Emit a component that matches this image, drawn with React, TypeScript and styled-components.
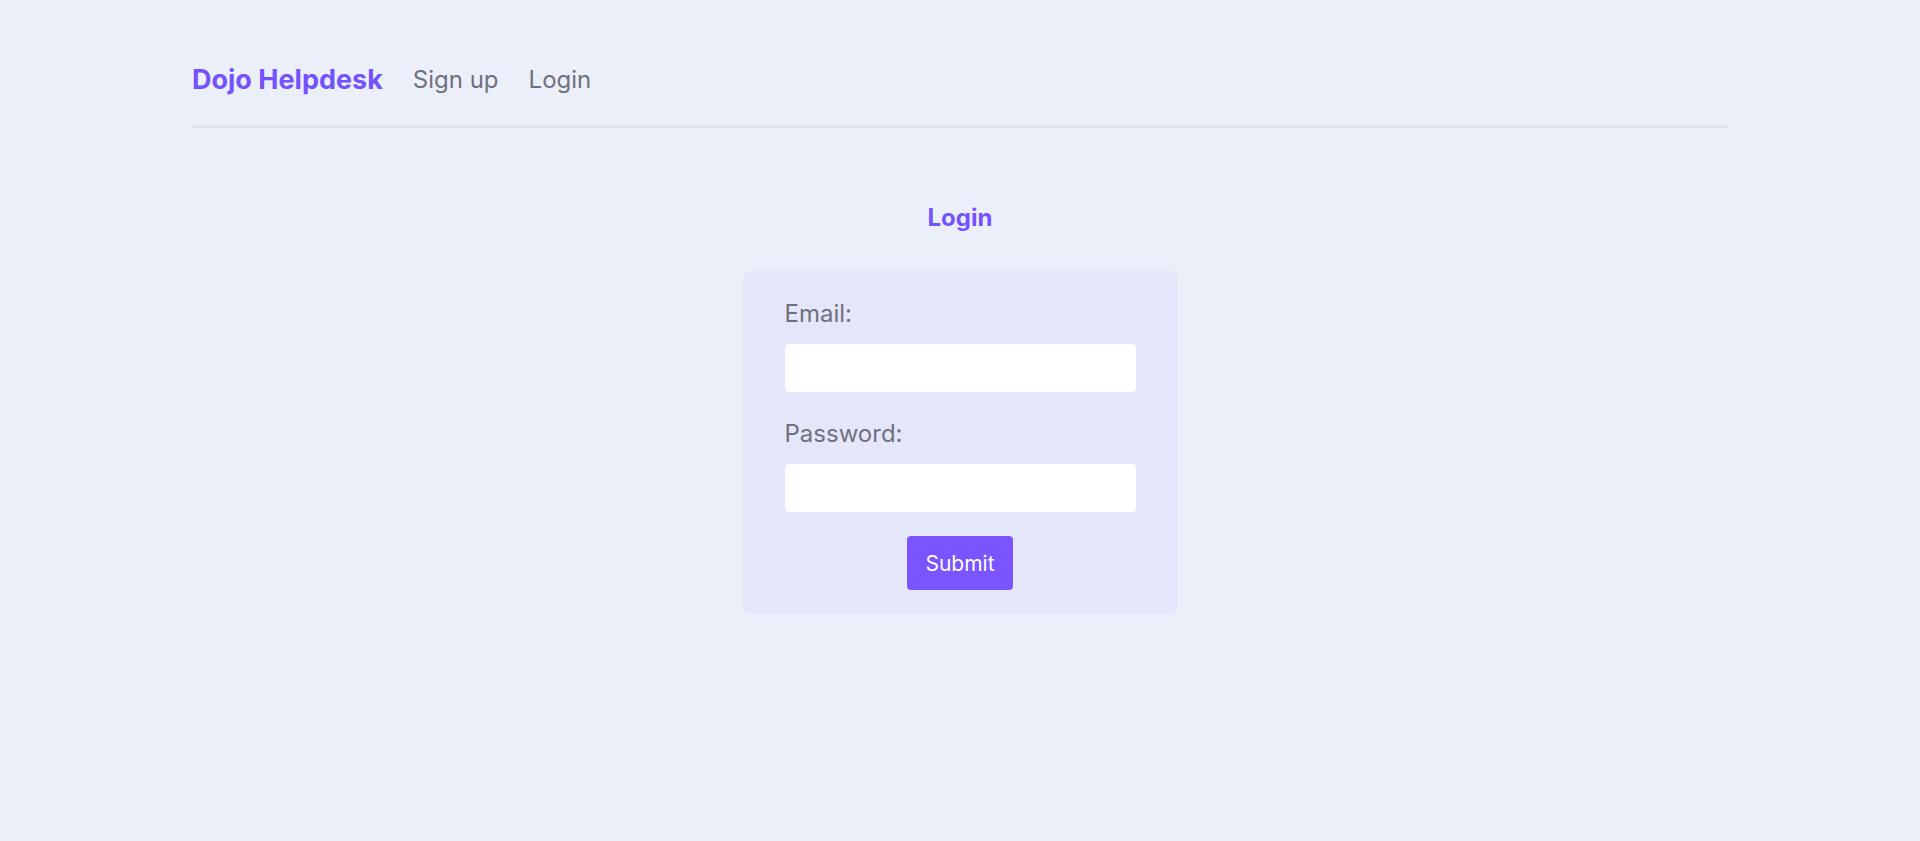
import styled, { createGlobalStyle } from "styled-components";

const GlobalStyle = createGlobalStyle`
    body {
        margin: 0;
        background: #ebeffa;
        font-family: Inter, "Noto Sans", sans-serif;
        color: #70707e;
    }
`

const Page = styled.div`
    width: 80%;
    margin: 0 auto;
`

const Nav = styled.nav`
    display: flex;
    align-items: center;
    gap: 30px;
    padding: 63px 0 29px;
    border-bottom: 3px solid #e3e5ec;
`

const Brand = styled.h1`
    margin: 0;
    font-size: 27px;
    font-weight: 700;
    color: #7453fc;
`

const NavLink = styled.a`
    font-size: 24px;
    color: #70707e;
    text-decoration: none;
`

const Main = styled.main`
    display: flex;
    flex-direction: column;
    align-items: center;
    padding-top: 75px;
`

const Heading = styled.h2`
    margin: 0 0 39px;
    font-size: 24px;
    font-weight: 700;
    color: #7453fc;
`

const Form = styled.form`
    box-sizing: border-box;
    width: 435px;
    padding: 28px 42px 24px;
    background: #e4e7f9;
    border-radius: 8px;
    display: flex;
    flex-direction: column;
`

const Label = styled.label`
    display: block;
    font-size: 24px;
    margin-bottom: 16px;
`

const Input = styled.input`
    box-sizing: border-box;
    width: 100%;
    height: 48px;
    border: none;
    border-radius: 4px;
    background: #fff;
    margin-bottom: ${({ $last }: { $last?: boolean }) => ($last ? "24px" : "27px")};
`

const Button = styled.button`
    align-self: center;
    width: 106px;
    height: 54px;
    border: none;
    border-radius: 4px;
    background: #7a55fd;
    color: #fff;
    font-family: Inter, "Noto Sans", sans-serif;
    font-size: 21px;
`

export default function App() {
    return (
        <>
            <GlobalStyle />
            <Page>
                <Nav>
                    <Brand>Dojo Helpdesk</Brand>
                    <NavLink href="#">Sign up</NavLink>
                    <NavLink href="#">Login</NavLink>
                </Nav>
                <Main>
                    <Heading>Login</Heading>
                    <Form onSubmit={(e) => e.preventDefault()}>
                        <Label htmlFor="email">Email:</Label>
                        <Input id="email" type="email" />
                        <Label htmlFor="password">Password:</Label>
                        <Input id="password" type="password" $last />
                        <Button type="submit">Submit</Button>
                    </Form>
                </Main>
            </Page>
        </>
    )
}
